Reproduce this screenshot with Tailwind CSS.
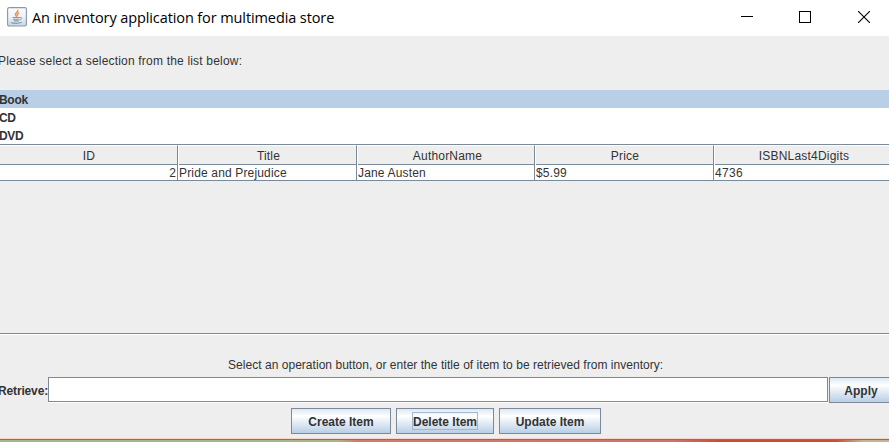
<!DOCTYPE html>
<html lang="en">
<head>
<meta charset="utf-8">
<title>An inventory application for multimedia store</title>
<script src="https://cdn.jsdelivr.net/npm/@tailwindcss/browser@4"></script>
</head>
<body class="w-[889px] h-[442px] overflow-hidden bg-[#eeeeee] text-[#333333] font-['Liberation_Sans',Arial,sans-serif] text-[12px] leading-[14px] whitespace-nowrap flex flex-col">
  <header class="h-9 shrink-0 bg-white flex items-center pl-[7px] text-black">
    <svg class="w-5 h-5 shrink-0 -mt-[3px]" viewBox="0 0 20 20" fill="none">
      <defs><linearGradient id="tile" x1="0" y1="0" x2="0" y2="1"><stop offset="0" stop-color="#fbfcfd"/><stop offset=".5" stop-color="#eef2f6"/><stop offset="1" stop-color="#cbd6e0"/></linearGradient></defs>
      <rect x=".6" y=".6" width="18.8" height="18.4" rx="1.5" fill="url(#tile)" stroke="#8499ab" stroke-width="1.1"/>
      <path d="M10.8 3c.8 2-3 3-2.3 4.700.3.900 1.200 1.300 1.100 2.300M12.200 5.600c-2 1-2.200 1.900-1.300 3" stroke="#e8914f" stroke-width="1.500"/>
      <path d="M5.500 10.500h7.500M6 12.200h6.500M6.800 13.900h5" stroke="#7e9bb2" stroke-width="1.100"/>
      <path d="M13 10.500c2.500-.6 2.500 1.700-.3 2.300" stroke="#7e9bb2" stroke-width=".9"/>
      <path d="M4 15.500c2 1.200 8.500 1.200 10.700-.2" stroke="#7e9bb2" stroke-width="1.200"/>
    </svg>
    <h1 class="ml-[5px] -mt-[1px] w-[303px] text-[14.500px] leading-5 tracking-[-0.100px] font-['Open_Sans','Noto_Sans',sans-serif]">An inventory application for multimedia store</h1>
    <div class="ml-auto flex items-center pr-[19px] gap-[46px]">
      <svg class="w-3 h-3 -mt-[2px]" viewBox="0 0 12 12" shape-rendering="crispEdges"><path d="M0 5h12v1H0z" fill="#000"/></svg>
      <svg class="w-3 h-3 -mt-[2px]" viewBox="0 0 12 12" shape-rendering="crispEdges"><path d="M.5.5h11v11H.5z" fill="none" stroke="#000"/></svg>
      <svg class="ml-px w-3 h-3 -mt-[2px]" viewBox="0 0 12 12"><path d="M0 0l12 12M12 0l-12 12" stroke="#000" stroke-width="1.100"/></svg>
    </div>
  </header>

  <p class="h-[54px] shrink-0 pt-[18px] -ml-[2px]"><span class="tracking-[0.190px]">Please select a selection from the list below:</span></p>

  <ul class="h-[54px] shrink-0 bg-white font-bold leading-[18px]">
    <li class="h-[18px] bg-[#b8cfe5] pt-px"><span class="-ml-px tracking-[-0.300px]">Book</span></li>
    <li class="h-[18px] pt-px"><span class="-ml-px tracking-[-0.500px]">CD</span></li>
    <li class="h-[18px] pt-px"><span class="-ml-px tracking-[-0.300px]">DVD</span></li>
  </ul>

  <section class="h-[190px] shrink-0 border-y border-[#7a8a99]">
    <div class="grid grid-cols-[178px_179px_178px_179px_1fr] h-5 border-b border-[#7a8a99] text-center leading-5 tracking-[0.200px]">
      <div class="border-r border-[#7a8a99] border-t border-t-white pl-px">ID</div>
      <div class="border-r border-[#7a8a99] border-t border-t-white shadow-[inset_1px_0_0_#fff] pl-[3px]">Title</div>
      <div class="border-r border-[#7a8a99] border-t border-t-white shadow-[inset_1px_0_0_#fff] pl-[4px]">AuthorName</div>
      <div class="border-r border-[#7a8a99] border-t border-t-white shadow-[inset_1px_0_0_#fff] pl-[2px]">Price</div>
      <div class="border-t border-t-white shadow-[inset_1px_0_0_#fff] pl-[5px]">ISBNLast4Digits</div>
    </div>
    <div class="grid grid-cols-[178px_179px_178px_179px_1fr] h-4 bg-white border-b border-[#7a8a99] leading-4 tracking-[0.160px]">
      <div class="border-r border-[#7a8a99] text-right pr-px">2</div>
      <div class="border-r border-[#7a8a99] pl-px">Pride and Prejudice</div>
      <div class="border-r border-[#7a8a99] pl-px">Jane Austen</div>
      <div class="border-r border-[#7a8a99] pl-px">$5.99</div>
      <div class="pl-px tracking-[0.300px]">4736</div>
    </div>
  </section>

  <p class="h-[43px] shrink-0 border-t border-white pt-[23px] pl-[228px]"><span class="tracking-[0.035px]">Select an operation button, or enter the title of item to be retrieved from inventory:</span></p>

  <form class="h-[26px] shrink-0 flex font-bold">
    <label for="query" class="w-12 shrink-0 pt-[7px]"><span class="-ml-[2px] tracking-[-0.150px]">Retrieve:</span></label>
    <div class="w-[780px] h-[26px] shrink-0 border-b border-white"><input id="query" type="text" class="block w-full h-[25px] bg-white border border-[#7a8a99] outline-none"></div>
    <button type="button" class="ml-px w-[66px] h-[26px] shrink-0 border border-[#7a8a99] bg-linear-to-b from-[#dde8f3] via-white via-30% to-[#b8cfe5] pt-px pr-[2px]">Apply</button>
  </form>

  <div class="h-[35px] shrink-0 pt-[5px] pl-[291px] flex gap-[5px] font-bold">
    <button class="w-[100px] h-[26px] border border-[#7a8a99] bg-linear-to-b from-[#dde8f3] via-white via-30% to-[#b8cfe5] pt-px">Create Item</button>
    <button class="w-[98px] h-[26px] border border-[#7a8a99] bg-linear-to-b from-[#dde8f3] via-white via-30% to-[#b8cfe5] flex justify-center items-center"><span class="w-[66px] h-[18px] border border-[#a3b8cc] leading-[18px] flex justify-center">Delete Item</span></button>
    <button class="w-[102px] h-[26px] border border-[#7a8a99] bg-linear-to-b from-[#dde8f3] via-white via-30% to-[#b8cfe5] pt-px">Update Item</button>
  </div>

  <footer class="h-1 shrink-0 border-t border-[#f8d5cc]">
    <div class="h-px bg-[#b5604f]"></div>
    <div class="h-0.5 bg-[linear-gradient(to_right,#a9b588_38%,#cc7f70_40%,#cc7465_76%,#c84c38_81%,#c84c38_94%,#bcb78d_97%)]"></div>
  </footer>
</body>
</html>
